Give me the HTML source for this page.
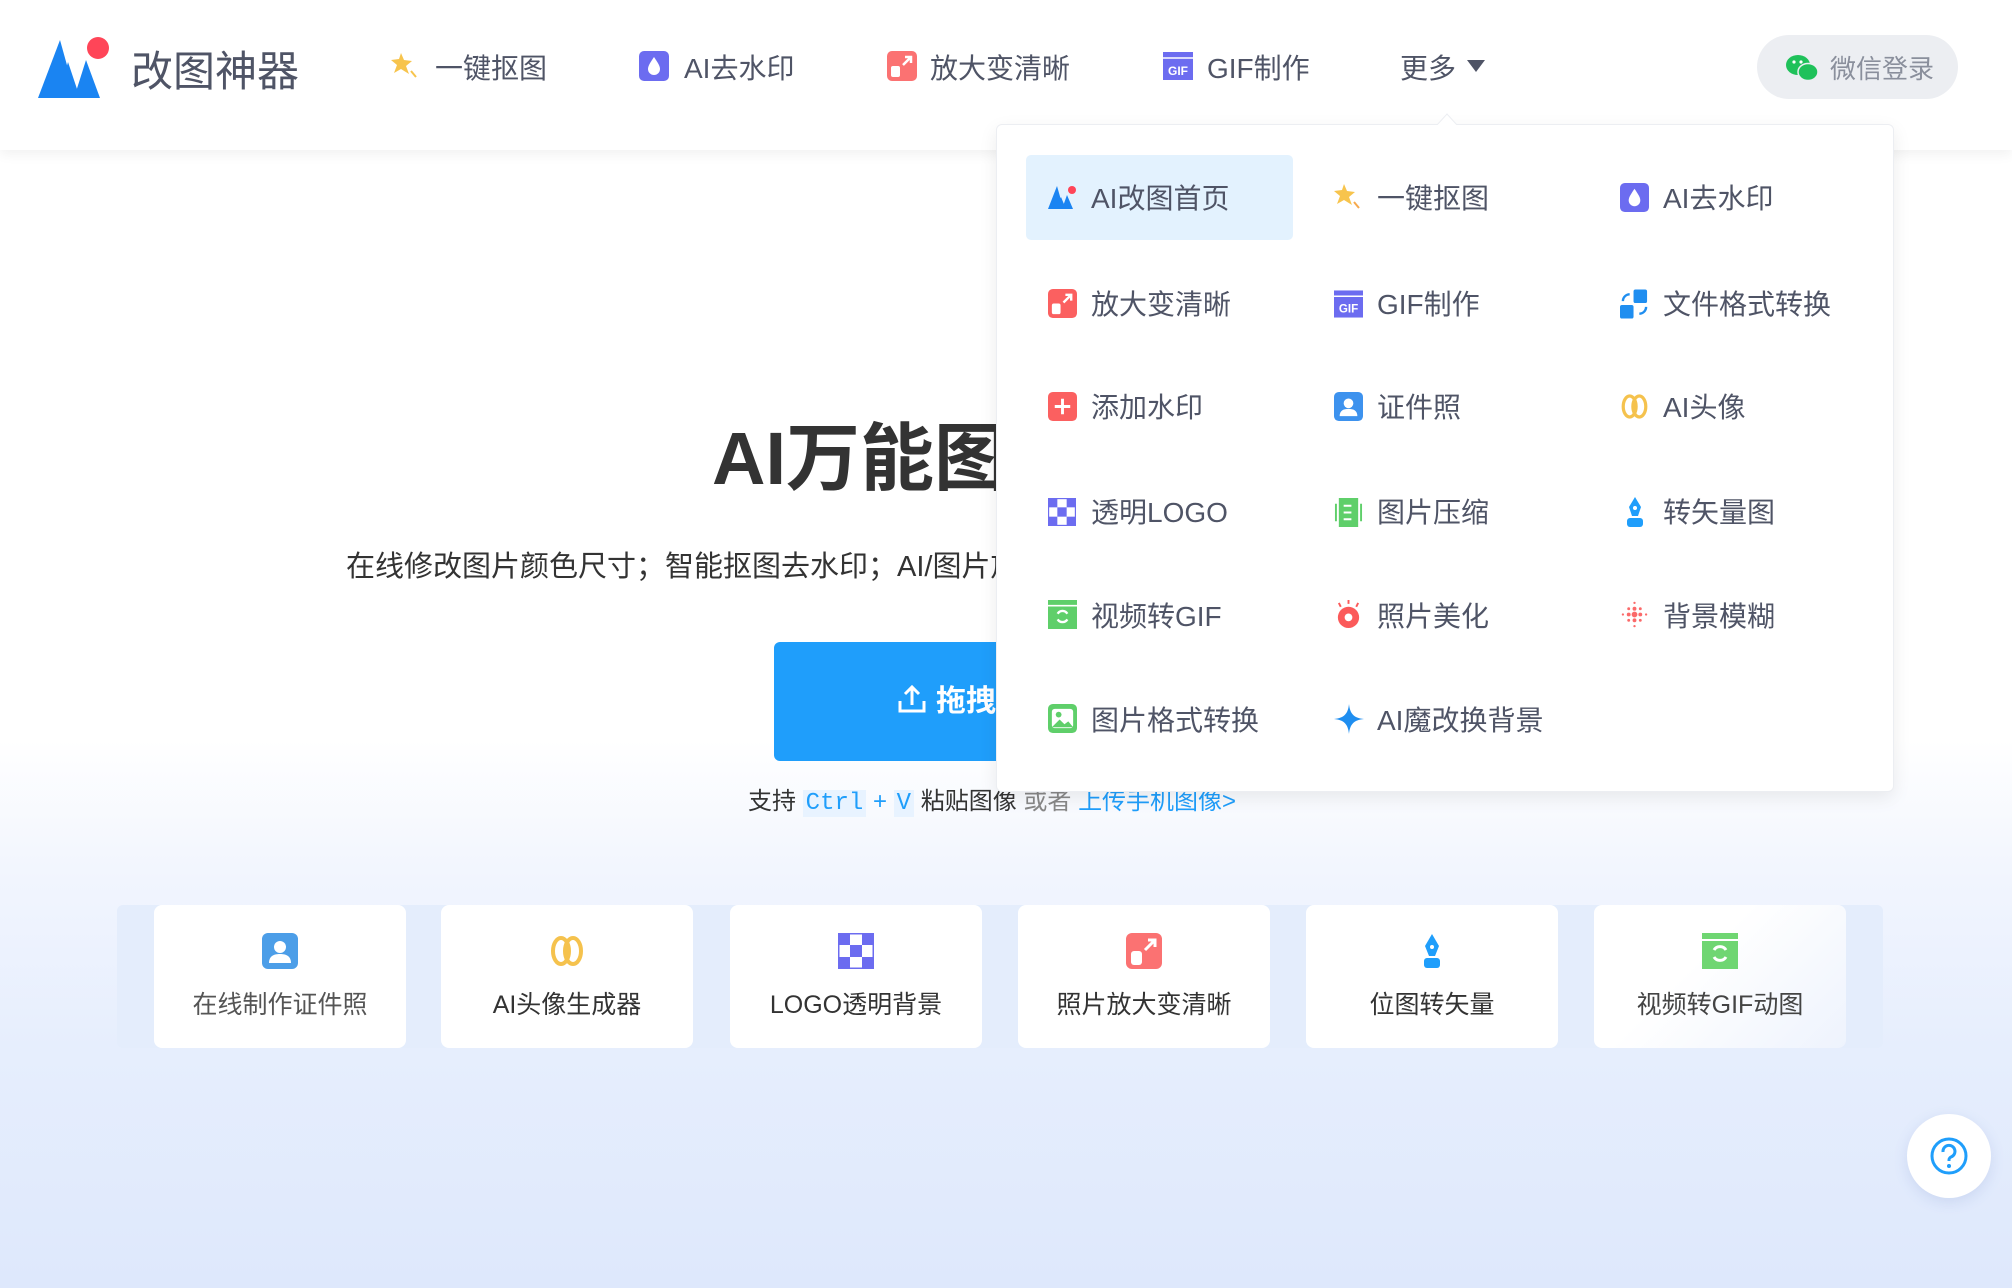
<!DOCTYPE html>
<html><head><meta charset="utf-8"><style>
*{margin:0;padding:0;box-sizing:border-box}
body{width:2012px;height:1288px;overflow:hidden;position:relative;font-family:"Liberation Sans","Noto Sans CJK SC",sans-serif;background:linear-gradient(180deg,#fff 0,#fff 740px,#f1f5fe 880px,#e6eefd 1050px,#dee8fc 1288px);color:#333}
.hdr{position:absolute;left:0;top:0;width:2012px;height:150px;background:#fff;box-shadow:0 4px 12px rgba(0,0,0,.06)}
.a{position:absolute;white-space:nowrap}
.nav{font-size:28px;color:#4f5466;top:47px}
.ic{position:absolute}
.dd{position:absolute;left:996px;top:124px;width:898px;height:668px;background:#fff;border:1px solid #eceef2;border-radius:6px;box-shadow:0 6px 18px rgba(0,0,0,.08);z-index:5}
.it{position:absolute;font-size:28px;color:#4f5466}
.card{position:absolute;top:905px;width:252px;height:143px;background:#fff;border-radius:8px;text-align:center}
.card span{position:absolute;left:0;right:0;top:80px;font-size:25px;color:#333}
.card svg{position:absolute;left:108px;top:28px}
</style></head><body>
<div class="a" style="left:712px;top:399px;font-size:74px;font-weight:bold;color:#333">AI万能图片编辑器</div>
<div class="a" style="left:346px;top:543px;font-size:29px;color:#333">在线修改图片颜色尺寸；智能抠图去水印；AI/图片放大变清晰</div>
<div class="a" style="left:774px;top:642px;width:464px;height:119px;background:#1f9efb;border-radius:6px;color:#fff;font-size:30px;font-weight:bold;text-align:center;line-height:119px"><svg width="32" height="32" viewBox="0 0 32 32" style="vertical-align:-4px;margin-right:8px"><path d="M16 22V5M9 11l7-7 7 7M4 18v10h24V18" stroke="#fff" stroke-width="3" fill="none"/></svg>拖拽上传图片</div>
<div class="a" style="left:748px;top:781px;font-size:24px;color:#333">支持 <span style="background:#e8f3ff;color:#1f9efb;font-family:'Liberation Mono',monospace;padding:0 3px">Ctrl</span><span style="color:#1f9efb"> + </span><span style="background:#e8f3ff;color:#1f9efb;font-family:'Liberation Mono',monospace;padding:0 3px">V</span> 粘贴图像 <span style="color:#888">或者</span> <span style="color:#1f9efb">上传手机图像&gt;</span></div>
<div class="a" style="left:117px;top:905px;width:1766px;height:143px;background:#e4edfc;border-radius:6px"></div>
<div class="card" style="left:154px"><svg width="36" height="36" viewBox="0 0 36 36"><rect width="36" height="36" rx="6" fill="#4c9ee8"/><circle cx="18" cy="14" r="6" fill="#fff"/><path d="M7 30c0-7 5-9 11-9s11 2 11 9z" fill="#fff"/></svg><span style="color:#555">在线制作证件照</span></div>
<div class="card" style="left:441px"><svg width="36" height="36" viewBox="0 0 36 36"><ellipse cx="12" cy="18" rx="8" ry="13" fill="none" stroke="#f5c24d" stroke-width="4"/><ellipse cx="24" cy="18" rx="8" ry="13" fill="none" stroke="#f5c24d" stroke-width="4"/></svg><span>AI头像生成器</span></div>
<div class="card" style="left:730px"><svg width="36" height="36" viewBox="0 0 36 36"><rect width="36" height="36" fill="#fff" stroke="#6c6cf0" stroke-width="3"/><rect x="0" y="0" width="12" height="12" fill="#6c6cf0"/><rect x="24" y="0" width="12" height="12" fill="#6c6cf0"/><rect x="12" y="12" width="12" height="12" fill="#6c6cf0"/><rect x="0" y="24" width="12" height="12" fill="#6c6cf0"/><rect x="24" y="24" width="12" height="12" fill="#6c6cf0"/></svg><span>LOGO透明背景</span></div>
<div class="card" style="left:1018px"><svg width="36" height="36" viewBox="0 0 36 36"><rect width="36" height="36" rx="6" fill="#fb7272"/><rect x="5" y="18" width="11" height="14" rx="3" fill="#fff"/><path d="M19 17l10-10M22 7h7v7" stroke="#fff" stroke-width="3" fill="none"/></svg><span>照片放大变清晰</span></div>
<div class="card" style="left:1306px"><svg width="36" height="36" viewBox="0 0 36 36"><path d="M18 1l-7 12 4 10h6l4-10z" fill="#1f9efb"/><circle cx="18" cy="14" r="2" fill="#fff"/><rect x="10" y="25" width="16" height="10" rx="3" fill="#1f9efb"/></svg><span>位图转矢量</span></div>
<div class="card" style="left:1594px;background:linear-gradient(135deg,#fff 40%,#eef3fd)"><svg width="36" height="36" viewBox="0 0 36 36"><rect width="36" height="36" fill="#6fd672"/><path d="M0 7h36" stroke="#fff" stroke-width="2"/><path d="M24 17a7 7 0 0 0-12 0M12 24a7 7 0 0 0 12 0" stroke="#fff" stroke-width="3" fill="none"/></svg><span style="color:#444">视频转GIF动图</span></div>
<div class="a" style="left:1907px;top:1114px;width:84px;height:84px;border-radius:50%;background:#fff;box-shadow:0 4px 14px rgba(80,110,180,.15)"><svg width="40" height="40" viewBox="0 0 40 40" style="position:absolute;left:22px;top:22px"><circle cx="20" cy="20" r="17" fill="none" stroke="#1f9efb" stroke-width="3"/><path d="M14 16a6 6 0 1 1 8 5c-2 1-2 2-2 4" stroke="#1f9efb" stroke-width="3" fill="none"/><circle cx="20" cy="30" r="2" fill="#1f9efb"/></svg></div>
<div class="hdr">
<svg class="ic" style="left:38px;top:36px" width="82" height="62" viewBox="0 0 82 62"><path d="M0 62L22 4 32 40 22 62z" fill="#1a84f2"/><path d="M36 62L48 24 62 62z" fill="#1a84f2"/><path d="M20 62L30 26 42 62z" fill="#1a84f2"/><circle cx="60" cy="12" r="11" fill="#ff4558"/></svg>
<div class="a" style="left:131px;top:38px;font-size:42px;color:#4f5466">改图神器</div>
<svg class="ic" style="left:391px;top:51px" width="30" height="30" viewBox="0 0 30 30"><path d="M10 2l3 7 8 1-6 5 3 8-8-5-7 4 3-8-6-5 8-1z" fill="#f7c44d"/><path d="M20 20l5 6" stroke="#f7c44d" stroke-width="2"/></svg>
<div class="a nav" style="left:435px">一键抠图</div>
<svg class="ic" style="left:639px;top:51px" width="30" height="30" viewBox="0 0 30 30"><rect width="30" height="30" rx="5" fill="#6c6cf0"/><path d="M15 6c-4 6-6 9-6 12a6 6 0 0 0 12 0c0-3-2-6-6-12z" fill="#fff"/></svg>
<div class="a nav" style="left:684px">AI去水印</div>
<svg class="ic" style="left:887px;top:51px" width="30" height="30" viewBox="0 0 30 30"><rect width="30" height="30" rx="5" fill="#fb7272"/><rect x="4" y="15" width="9" height="11" rx="2" fill="#fff"/><path d="M16 14l8-8M18 6h6v6" stroke="#fff" stroke-width="2.5" fill="none"/></svg>
<div class="a nav" style="left:930px">放大变清晰</div>
<svg class="ic" style="left:1163px;top:52px" width="30" height="28" viewBox="0 0 30 28"><rect width="30" height="28" fill="#6c6cf0"/><path d="M0 6h30" stroke="#fff" stroke-width="1.5"/><text x="15" y="23" font-size="12" font-family="Liberation Sans" font-weight="bold" fill="#fff" text-anchor="middle">GIF</text></svg>
<div class="a nav" style="left:1207px">GIF制作</div>
<div class="a nav" style="left:1400px">更多</div>
<svg class="ic" style="left:1467px;top:60px" width="18" height="12"><path d="M0 0h18L9 12z" fill="#4f5466"/></svg>
<div class="a" style="left:1757px;top:35px;width:201px;height:64px;border-radius:32px;background:#eceef2"><svg style="position:absolute;left:28px;top:18px" width="34" height="30" viewBox="0 0 34 30"><ellipse cx="13" cy="12" rx="12" ry="10" fill="#1fc15a"/><ellipse cx="23" cy="19" rx="10" ry="8.5" fill="#1fc15a" stroke="#eceef2" stroke-width="1.5"/><circle cx="9" cy="9" r="1.6" fill="#fff"/><circle cx="16" cy="9" r="1.6" fill="#fff"/></svg><span style="position:absolute;left:73px;top:14px;font-size:26px;color:#8a8f9c">微信登录</span></div>
</div>
<div class="dd">
<svg style="position:absolute;left:440px;top:-12px" width="20" height="12"><path d="M0 12L10 1 20 12" fill="#fff" stroke="#eceef2"/></svg>
<div style="position:absolute;left:29px;top:30px;width:267px;height:85px;background:#e3f2fe;border-radius:5px"></div>
<svg class="ic" style="left:51px;top:60px" width="30" height="24" viewBox="0 0 30 24"><path d="M0 24L9 1 13 15 9 24zM8 24l5-12 5 12zM14 24l5-14 6 14z" fill="#1a84f2"/><circle cx="24" cy="5" r="4" fill="#ff4558"/></svg>
<div class="it" style="left:94px;top:52px">AI改图首页</div>
<svg class="ic" style="left:337px;top:57px" width="30" height="30" viewBox="0 0 30 30"><path d="M10 2l3 7 8 1-6 5 3 8-8-5-7 4 3-8-6-5 8-1z" fill="#f7c44d"/><path d="M20 20l5 6" stroke="#f7a94d" stroke-width="2"/></svg>
<div class="it" style="left:380px;top:52px">一键抠图</div>
<svg class="ic" style="left:623px;top:58px" width="29" height="29" viewBox="0 0 30 30"><rect width="30" height="30" rx="5" fill="#6c6cf0"/><path d="M15 6c-4 6-6 9-6 12a6 6 0 0 0 12 0c0-3-2-6-6-12z" fill="#fff"/></svg>
<div class="it" style="left:666px;top:52px">AI去水印</div>
<svg class="ic" style="left:51px;top:164px" width="29" height="29" viewBox="0 0 30 30"><rect width="30" height="30" rx="5" fill="#fb6060"/><rect x="4" y="15" width="9" height="11" rx="2" fill="#fff"/><path d="M16 14l8-8M18 6h6v6" stroke="#fff" stroke-width="2.5" fill="none"/></svg>
<div class="it" style="left:94px;top:158px">放大变清晰</div>
<svg class="ic" style="left:337px;top:165px" width="29" height="28" viewBox="0 0 30 28"><rect width="30" height="28" fill="#6c6cf0"/><path d="M0 6h30" stroke="#fff" stroke-width="1.5"/><text x="15" y="23" font-size="12" font-family="Liberation Sans" font-weight="bold" fill="#fff" text-anchor="middle">GIF</text></svg>
<div class="it" style="left:380px;top:158px">GIF制作</div>
<svg class="ic" style="left:623px;top:164px" width="29" height="30" viewBox="0 0 30 30"><rect x="14" y="0" width="14" height="14" rx="2" fill="#1f8ef0"/><rect x="0" y="16" width="14" height="14" rx="2" fill="#1f8ef0"/><path d="M3 12a7 7 0 0 1 7-7M27 18a7 7 0 0 1-7 7" stroke="#1f8ef0" stroke-width="2.5" fill="none"/></svg>
<div class="it" style="left:666px;top:158px">文件格式转换</div>
<svg class="ic" style="left:51px;top:267px" width="29" height="29" viewBox="0 0 30 30"><rect width="30" height="30" rx="5" fill="#fb6060"/><path d="M15 7v16M7 15h16" stroke="#fff" stroke-width="3"/></svg>
<div class="it" style="left:94px;top:261px">添加水印</div>
<svg class="ic" style="left:337px;top:267px" width="29" height="29" viewBox="0 0 36 36"><rect width="36" height="36" rx="6" fill="#3d92ee"/><circle cx="18" cy="14" r="6" fill="#fff"/><path d="M7 30c0-7 5-9 11-9s11 2 11 9z" fill="#fff"/></svg>
<div class="it" style="left:380px;top:261px">证件照</div>
<svg class="ic" style="left:623px;top:267px" width="29" height="29" viewBox="0 0 36 36"><ellipse cx="12" cy="18" rx="8" ry="13" fill="none" stroke="#f5c24d" stroke-width="4"/><ellipse cx="24" cy="18" rx="8" ry="13" fill="none" stroke="#f5c24d" stroke-width="4"/></svg>
<div class="it" style="left:666px;top:261px">AI头像</div>
<svg class="ic" style="left:51px;top:373px" width="28" height="28" viewBox="0 0 36 36"><rect width="36" height="36" fill="#fff" stroke="#6c6cf0" stroke-width="3"/><rect x="0" y="0" width="12" height="12" fill="#6c6cf0"/><rect x="24" y="0" width="12" height="12" fill="#6c6cf0"/><rect x="12" y="12" width="12" height="12" fill="#6c6cf0"/><rect x="0" y="24" width="12" height="12" fill="#6c6cf0"/><rect x="24" y="24" width="12" height="12" fill="#6c6cf0"/></svg>
<div class="it" style="left:94px;top:366px">透明LOGO</div>
<svg class="ic" style="left:337px;top:373px" width="29" height="29" viewBox="0 0 30 30"><rect x="5" y="0" width="20" height="30" fill="#5fcf6a"/><path d="M10 8h8M10 15h8M10 22h8" stroke="#fff" stroke-width="2"/><path d="M2 6v18M28 6v18" stroke="#5fcf6a" stroke-width="2"/></svg>
<div class="it" style="left:380px;top:366px">图片压缩</div>
<svg class="ic" style="left:626px;top:372px" width="24" height="30" viewBox="0 0 24 30"><path d="M12 0l-6 10 3 9h6l3-9z" fill="#1f9efb"/><circle cx="12" cy="11" r="2" fill="#fff"/><rect x="4" y="21" width="16" height="9" rx="3" fill="#1f9efb"/></svg>
<div class="it" style="left:666px;top:366px">转矢量图</div>
<svg class="ic" style="left:51px;top:475px" width="29" height="29" viewBox="0 0 36 36"><rect width="36" height="36" fill="#5fcf6a"/><path d="M0 7h36" stroke="#fff" stroke-width="2"/><path d="M24 17a7 7 0 0 0-12 0M12 24a7 7 0 0 0 12 0" stroke="#fff" stroke-width="3" fill="none"/></svg>
<div class="it" style="left:94px;top:470px">视频转GIF</div>
<svg class="ic" style="left:337px;top:475px" width="29" height="29" viewBox="0 0 30 30"><circle cx="15" cy="18" r="11" fill="#fb5a5a"/><circle cx="15" cy="18" r="4" fill="#fff"/><path d="M15 0v4M5 3l2 4M25 3l-2 4" stroke="#fb5a5a" stroke-width="2"/></svg>
<div class="it" style="left:380px;top:470px">照片美化</div>
<svg class="ic" style="left:623px;top:475px" width="29" height="29" viewBox="0 0 30 30"><g fill="#fb6a6a"><circle cx="15" cy="15" r="3"/><circle cx="9" cy="15" r="2"/><circle cx="21" cy="15" r="2"/><circle cx="15" cy="9" r="2"/><circle cx="15" cy="21" r="2"/><circle cx="9" cy="9" r="1.5"/><circle cx="21" cy="9" r="1.5"/><circle cx="9" cy="21" r="1.5"/><circle cx="21" cy="21" r="1.5"/><circle cx="3" cy="15" r="1.2"/><circle cx="27" cy="15" r="1.2"/><circle cx="15" cy="3" r="1.2"/><circle cx="15" cy="27" r="1.2"/></g></svg>
<div class="it" style="left:666px;top:470px">背景模糊</div>
<svg class="ic" style="left:51px;top:579px" width="29" height="29" viewBox="0 0 30 30"><rect width="30" height="30" rx="5" fill="#5fcf6a"/><rect x="4" y="5" width="22" height="20" rx="3" fill="#fff"/><circle cx="11" cy="11" r="3" fill="#5fcf6a"/><path d="M4 24l8-8 5 5 4-3 5 6z" fill="#5fcf6a"/></svg>
<div class="it" style="left:94px;top:574px">图片格式转换</div>
<svg class="ic" style="left:337px;top:579px" width="30" height="30" viewBox="0 0 30 30"><path d="M15 0C16 10 20 14 30 15 20 16 16 20 15 30 14 20 10 16 0 15 10 14 14 10 15 0z" fill="#1f8ef0"/></svg>
<div class="it" style="left:380px;top:574px">AI魔改换背景</div>
</div>
</body></html>
